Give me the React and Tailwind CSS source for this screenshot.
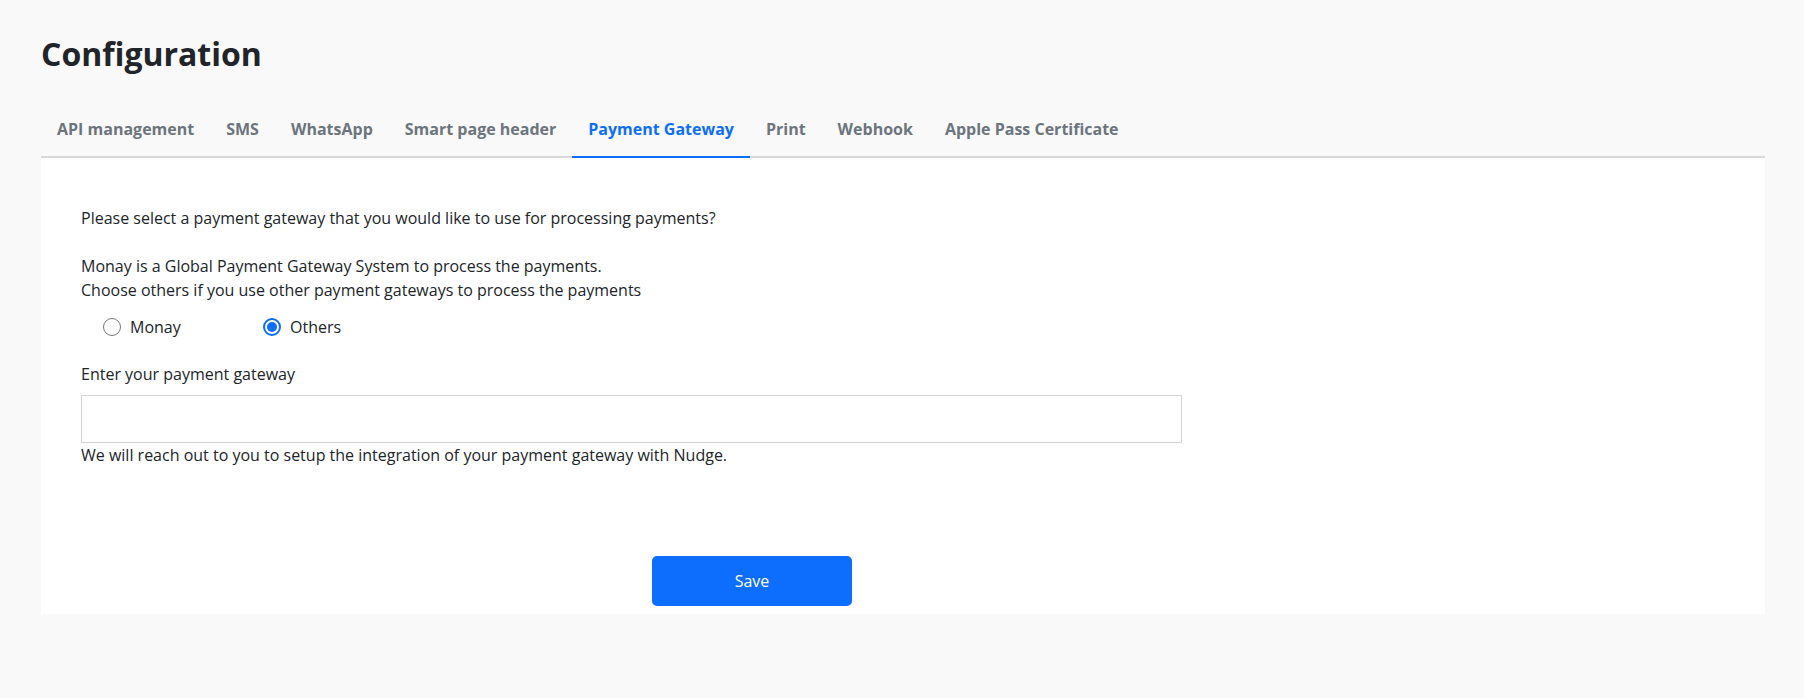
import React, { useState } from "react";

const tabs = [
  "API management",
  "SMS",
  "WhatsApp",
  "Smart page header",
  "Payment Gateway",
  "Print",
  "Webhook",
  "Apple Pass Certificate",
];

function Radio({ checked, label, onClick, className = "" }) {
  return (
    <label className={"flex items-center gap-[9px] cursor-pointer " + className} onClick={onClick}>
      {checked ? (
        <span className="w-[18px] h-[18px] rounded-full border-2 border-[#0d6efd] bg-white flex items-center justify-center">
          <span className="w-[10px] h-[10px] rounded-full bg-[#0d6efd]" />
        </span>
      ) : (
        <span className="w-[18px] h-[18px] rounded-full border-[1.5px] border-[#767676] bg-white" />
      )}
      <span>{label}</span>
    </label>
  );
}

export default function App() {
  const [choice, setChoice] = useState("others");
  return (
    <div className="min-h-screen bg-[#f9f9f9] font-['Open_Sans',sans-serif] text-[#212529] pl-[41px] pr-[39px]">
      <h1 className="pt-[35px] text-[32px] leading-[38px] font-bold text-[#212529]">Configuration</h1>
      <div className="mt-[30px] flex border-b-2 border-[#d9d9d9]">
        {tabs.map((t) => {
          const active = t === "Payment Gateway";
          return (
            <div
              key={t}
              className={
                active
                  ? "-mb-[2px] border-b-2 border-[#0d6efd] px-4 pt-[14px] pb-[15px] text-[16px] leading-6 font-bold text-[#0d6efd]"
                  : "-mb-[2px] border-b-2 border-transparent px-4 pt-[14px] pb-[15px] text-[16px] leading-6 font-bold text-[#6c757d]"
              }
            >
              {t}
            </div>
          );
        })}
      </div>
      <div className="bg-white pl-10 pr-10 pt-12 pb-2 text-[16px] leading-6">
        <p>Please select a payment gateway that you would like to use for processing payments?</p>
        <p className="mt-6">Monay is a Global Payment Gateway System to process the payments.</p>
        <p>Choose others if you use other payment gateways to process the payments</p>
        <div className="mt-[13px] ml-[22px] flex items-center h-6">
          <Radio checked={choice === "monay"} label="Monay" onClick={() => setChoice("monay")} className="w-[160px]" />
          <Radio checked={choice === "others"} label="Others" onClick={() => setChoice("others")} />
        </div>
        <p className="mt-[23px]">Enter your payment gateway</p>
        <input
          type="text"
          className="mt-[9px] block w-[1101px] h-[48px] border border-[#d4d4d4] bg-white px-3 outline-none"
        />
        <p>We will reach out to you to setup the integration of your payment gateway with Nudge.</p>
        <div className="mt-[89px] ml-[571px]">
          <button className="w-[200px] h-[50px] rounded-[5px] bg-[#0d6efd] text-white text-[16px]">Save</button>
        </div>
      </div>
    </div>
  );
}
